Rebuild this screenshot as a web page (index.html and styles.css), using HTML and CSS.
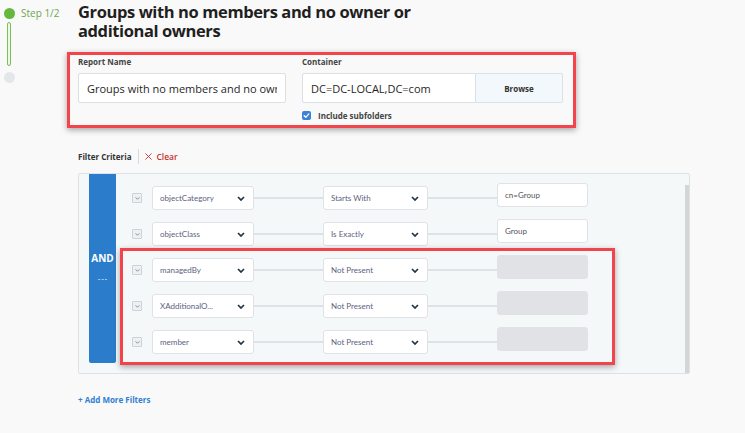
FILE: index.html
```html
<!DOCTYPE html>
<html>
<head>
<meta charset="utf-8">
<link rel="stylesheet" href="styles.css">
</head>
<body>
<div class="page">
  <aside class="steps">
    <div class="step-row"><span class="dot dot-on"></span><span class="step-label">Step 1/2</span></div>
    <div class="step-line"></div>
    <span class="dot dot-off"></span>
  </aside>
  <main class="main">
    <h1 class="title">Groups with no members and no owner or additional owners</h1>
    <section class="form-box">
      <div class="form-grid">
        <label class="lbl">Report Name</label>
        <label class="lbl">Container</label>
        <input class="input" type="text" value="Groups with no members and no owner or additional owners">
        <div class="container-field">
          <input class="input input-flat" type="text" value="DC=DC-LOCAL,DC=com">
          <div class="browse">Browse</div>
        </div>
        <div></div>
        <div class="check-row">
          <span class="checkbox"><svg viewBox="0 0 10 10" width="9" height="9"><path d="M2.4 5.2 L4.2 7 L7.6 3.2" fill="none" stroke="#fff" stroke-width="1.4" stroke-linecap="round" stroke-linejoin="round"/></svg></span>
          <span class="check-text">Include subfolders</span>
        </div>
      </div>
    </section>

    <div class="filter-head">
      <span class="fh-title">Filter Criteria</span>
      <span class="fh-sep"></span>
      <span class="fh-clear"><svg viewBox="0 0 8 8" width="7" height="7"><path d="M0.5 0.5 L7.5 7.5 M7.5 0.5 L0.5 7.5" stroke="#c62f2f" stroke-width="1"/></svg>Clear</span>
    </div>

    <section class="panel">
      <div class="and-bar"><span class="and">AND</span><span class="dash">---</span></div>
      <div class="rows">
        <div class="row">
          <span class="exp"><svg viewBox="0 0 6 4" width="5" height="3"><path d="M0.5 0.5 L3 3 L5.5 0.5" fill="none" stroke="#5d6b79" stroke-width="1"/></svg></span>
          <div class="sel sel-field"><span>objectCategory</span><svg class="chev" viewBox="0 0 8 5" width="8" height="5"><path d="M1 1 L4 4 L7 1" fill="none" stroke="#1e3446" stroke-width="1.7"/></svg></div>
          <span class="link"></span>
          <div class="sel sel-op"><span>Starts With</span><svg class="chev" viewBox="0 0 8 5" width="8" height="5"><path d="M1 1 L4 4 L7 1" fill="none" stroke="#1e3446" stroke-width="1.7"/></svg></div>
          <span class="link"></span>
          <div class="val">cn=Group</div>
        </div>
        <div class="row">
          <span class="exp"><svg viewBox="0 0 6 4" width="5" height="3"><path d="M0.5 0.5 L3 3 L5.5 0.5" fill="none" stroke="#5d6b79" stroke-width="1"/></svg></span>
          <div class="sel sel-field"><span>objectClass</span><svg class="chev" viewBox="0 0 8 5" width="8" height="5"><path d="M1 1 L4 4 L7 1" fill="none" stroke="#1e3446" stroke-width="1.7"/></svg></div>
          <span class="link"></span>
          <div class="sel sel-op"><span>Is Exactly</span><svg class="chev" viewBox="0 0 8 5" width="8" height="5"><path d="M1 1 L4 4 L7 1" fill="none" stroke="#1e3446" stroke-width="1.7"/></svg></div>
          <span class="link"></span>
          <div class="val">Group</div>
        </div>
        <div class="highlight">
          <div class="row">
            <span class="exp"><svg viewBox="0 0 6 4" width="5" height="3"><path d="M0.5 0.5 L3 3 L5.5 0.5" fill="none" stroke="#5d6b79" stroke-width="1"/></svg></span>
            <div class="sel sel-field"><span>managedBy</span><svg class="chev" viewBox="0 0 8 5" width="8" height="5"><path d="M1 1 L4 4 L7 1" fill="none" stroke="#1e3446" stroke-width="1.7"/></svg></div>
            <span class="link"></span>
            <div class="sel sel-op"><span>Not Present</span><svg class="chev" viewBox="0 0 8 5" width="8" height="5"><path d="M1 1 L4 4 L7 1" fill="none" stroke="#1e3446" stroke-width="1.7"/></svg></div>
            <span class="link"></span>
            <div class="val val-off"></div>
          </div>
          <div class="row">
            <span class="exp"><svg viewBox="0 0 6 4" width="5" height="3"><path d="M0.5 0.5 L3 3 L5.5 0.5" fill="none" stroke="#5d6b79" stroke-width="1"/></svg></span>
            <div class="sel sel-field"><span>XAdditionalO...</span><svg class="chev" viewBox="0 0 8 5" width="8" height="5"><path d="M1 1 L4 4 L7 1" fill="none" stroke="#1e3446" stroke-width="1.7"/></svg></div>
            <span class="link"></span>
            <div class="sel sel-op"><span>Not Present</span><svg class="chev" viewBox="0 0 8 5" width="8" height="5"><path d="M1 1 L4 4 L7 1" fill="none" stroke="#1e3446" stroke-width="1.7"/></svg></div>
            <span class="link"></span>
            <div class="val val-off"></div>
          </div>
          <div class="row">
            <span class="exp"><svg viewBox="0 0 6 4" width="5" height="3"><path d="M0.5 0.5 L3 3 L5.5 0.5" fill="none" stroke="#5d6b79" stroke-width="1"/></svg></span>
            <div class="sel sel-field"><span>member</span><svg class="chev" viewBox="0 0 8 5" width="8" height="5"><path d="M1 1 L4 4 L7 1" fill="none" stroke="#1e3446" stroke-width="1.7"/></svg></div>
            <span class="link"></span>
            <div class="sel sel-op"><span>Not Present</span><svg class="chev" viewBox="0 0 8 5" width="8" height="5"><path d="M1 1 L4 4 L7 1" fill="none" stroke="#1e3446" stroke-width="1.7"/></svg></div>
            <span class="link"></span>
            <div class="val val-off"></div>
          </div>
        </div>
      </div>
      <div class="scrollbar"></div>
    </section>

    <div class="add-more">+ Add More Filters</div>
  </main>
</div>
</body>
</html>
```

FILE: styles.css
```css
* { box-sizing: border-box; }
html, body { margin: 0; padding: 0; }
body {
  background: #f9f9f9;
  font-family: "Open Sans", "Liberation Sans", sans-serif;
  color: #222;
  width: 745px;
  height: 433px;
  overflow: hidden;
}
.page { display: flex; }

/* steps */
.steps {
  width: 78px;
  flex: none;
  padding: 8px 0 0 4px;
  display: flex;
  flex-direction: column;
  align-items: flex-start;
}
.step-row { display: flex; align-items: center; gap: 6px; }
.dot { width: 11px; height: 11px; border-radius: 50%; display: block; flex: none; }
.dot-on { background: #64b83c; }
.dot-off { background: #e5e6ea; margin-top: 6px; }
.step-label { font-size: 10px; color: #6aa84f; line-height: 11px; }
.step-line {
  margin: 3px 0 0 3px;
  width: 4px;
  height: 44px;
  border: 1px solid #7ac053;
  background: #eef5ea;
  border-radius: 2px;
}

/* main */
.main { flex: 1; display: flex; flex-direction: column; align-items: flex-start; }
.title {
  margin: 2px 0 0 0;
  width: 360px;
  font-size: 16.5px;
  letter-spacing: -0.4px;
  line-height: 19px;
  font-weight: 700;
  color: #1f1f1f;
}

.form-box {
  margin: 12px 0 0 -11px;
  width: 509px;
  border: 3px solid #f2444b;
  padding: 0 10px 4px 8px;
  box-shadow: 0 2px 6px rgba(0, 0, 0, 0.35);
}
.form-grid {
  display: grid;
  grid-template-columns: 208px 261px;
  column-gap: 16px;
}
.lbl {
  font-size: 8px;
  font-weight: 700;
  color: #444;
  line-height: 12px;
  padding-top: 1px;
  height: 18px;
}
.input {
  display: block;
  width: 100%;
  height: 30px;
  margin: 0;
  background: #fff;
  border: 1px solid #dcdfe3;
  border-radius: 2px;
  padding: 0 8px;
  font-family: "Open Sans", "Liberation Sans", sans-serif;
  font-size: 11px;
  color: #1f1f1f;
  outline: none;
}
.container-field { display: flex; height: 30px; }
.input-flat { width: 174px; flex: none; border-radius: 2px 0 0 2px; }
.browse {
  flex: 1;
  background: #f2f8fb;
  border: 1px solid #dcdfe3;
  border-left: none;
  border-radius: 0 2px 2px 0;
  font-size: 8px;
  font-weight: 700;
  color: #333;
  display: flex;
  align-items: center;
  justify-content: center;
}
.check-row {
  display: flex;
  align-items: center;
  gap: 7px;
  height: 12px;
  margin-top: 6px;
}
.checkbox {
  width: 9px;
  height: 9px;
  background: #3c82d8;
  border-radius: 2px;
  display: flex;
  align-items: center;
  justify-content: center;
}
.checkbox svg { display: block; }
.check-text { font-size: 8px; font-weight: 700; color: #444; }

/* filter header */
.filter-head {
  margin-top: 20px;
  height: 16px;
  display: flex;
  align-items: center;
}
.fh-title { font-size: 8px; font-weight: 700; color: #333; }
.fh-sep { width: 1px; height: 15px; background: #d6d9dd; margin: 0 6px 0 7px; }
.fh-clear {
  font-size: 8.5px;
  font-weight: 600;
  color: #c62f2f;
  display: flex;
  align-items: center;
  gap: 4px;
}
.fh-clear svg { display: block; }

/* panel */
.panel {
  margin-top: 9px;
  width: 612px;
  height: 201px;
  background: #f5f8f9;
  border: 1px solid #dde2e6;
  border-radius: 2px;
  display: flex;
  align-items: stretch;
  padding-left: 10px;
}
.and-bar {
  width: 27px;
  flex: none;
  background: #2b7ccb;
  margin-bottom: 10px;
  border-radius: 0 0 2px 2px;
  display: flex;
  flex-direction: column;
  align-items: center;
  padding-top: 77px;
  color: #fff;
  font-family: "Open Sans", sans-serif;
  font-weight: 700;
}
.and { font-size: 10px; line-height: 14px; }
.dash { font-size: 8px; line-height: 10px; margin-top: 8px; font-weight: 400; letter-spacing: 0.8px; padding-left: 0.8px; }
.rows {
  flex: 1;
  padding: 12px 0 0 16px;
  display: flex;
  flex-direction: column;
  gap: 12px;
}
.row { display: flex; align-items: center; height: 24px; }
.exp {
  width: 10px;
  height: 10px;
  background: #eef0f3;
  border: 1px solid #cdd2d7;
  border-radius: 1px;
  display: flex;
  align-items: center;
  justify-content: center;
  margin-right: 10px;
  flex: none;
}
.exp svg { display: block; }
.sel {
  height: 24px;
  background: #fff;
  border: 1px solid #dfe2e6;
  border-radius: 3px;
  display: flex;
  align-items: center;
  justify-content: space-between;
  padding: 0 8px 0 7px;
  font-family: Lato, "Open Sans", sans-serif;
  font-size: 8px;
  color: #5d6180;
  flex: none;
}
.sel-field { width: 102px; }
.sel-op { width: 105px; }
.chev { display: block; }
.link { width: 69px; height: 2px; background: #dfe1e4; flex: none; }
.val {
  width: 91px;
  height: 24px;
  margin-bottom: 6px;
  background: #fff;
  border: 1px solid #dfe2e6;
  border-radius: 3px;
  padding: 0 7px;
  display: flex;
  align-items: center;
  font-family: Lato, "Open Sans", sans-serif;
  font-size: 8px;
  color: #555;
  flex: none;
}
.val-off { background: #e1e2e5; border-color: #e1e2e5; }
.highlight {
  margin: -10px 0 -11px -12px;
  width: 495px;
  border: 3px solid #f2444b;
  padding: 7px 0 8px 9px;
  display: flex;
  flex-direction: column;
  gap: 12px;
  box-shadow: 0 2px 6px rgba(0, 0, 0, 0.35);
}
.scrollbar {
  width: 4px;
  flex: none;
  margin-top: 11px;
  background: #d4d5d6;
}

.add-more {
  margin-top: 20px;
  font-size: 8px;
  font-weight: 700;
  color: #2f7fd3;
  line-height: 12px;
}
```
